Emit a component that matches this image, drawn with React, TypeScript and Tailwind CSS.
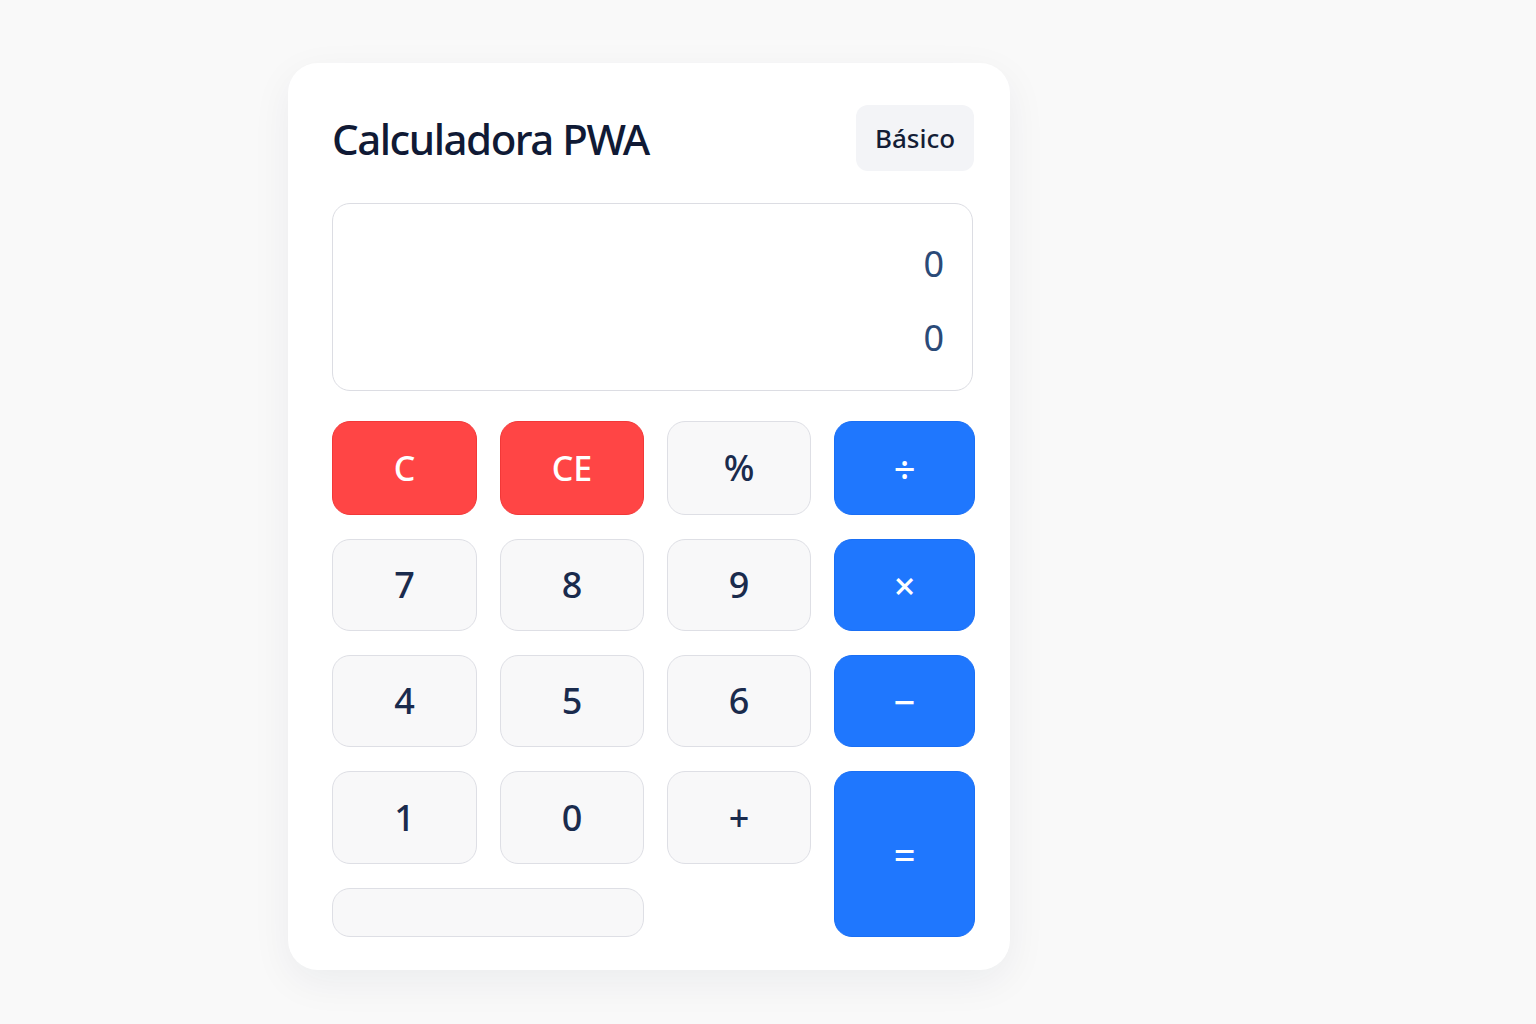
const font = { fontFamily: '"Noto Sans", "Open Sans", sans-serif' };

type Key = {
  label: string;
  kind: "num" | "red" | "op";
  className?: string;
};

const keys: Key[] = [
  { label: "C", kind: "red" },
  { label: "CE", kind: "red" },
  { label: "%", kind: "num", className: "text-[28px]" },
  { label: "÷", kind: "op" },
  { label: "7", kind: "num" },
  { label: "8", kind: "num" },
  { label: "9", kind: "num" },
  { label: "×", kind: "op" },
  { label: "4", kind: "num" },
  { label: "5", kind: "num" },
  { label: "6", kind: "num" },
  { label: "−", kind: "op" },
  { label: "1", kind: "num" },
  { label: "0", kind: "num" },
  { label: "+", kind: "num", className: "text-[32px]" },
  { label: "=", kind: "op", className: "row-span-2" },
];

const kindStyles = {
  num: "bg-[#f8f8f9] border-[#dedfe5] text-[#1a2b4d] text-[36px]",
  red: "bg-[#ff4545] border-[#f23838] text-white text-[34px]",
  op: "bg-[#1f77fe] border-[#1a6ff5] text-white text-[38px]",
};

const App = () => {
  return (
    <div className="min-h-screen bg-[#f9f9f9] pl-[288px] pt-[63px]" style={font}>
      <div className="w-[722px] h-[907px] bg-white rounded-[30px] shadow-[0_12px_40px_rgba(20,30,60,0.06)] pl-[44px] pr-[35px] pt-[42px]">
        {/* Header */}
        <div className="flex items-center justify-between pr-[1px]">
          <h1 className="text-[42px] font-medium tracking-[-0.035em] text-[#101a35] leading-none pt-[2px]">
            Calculadora PWA
          </h1>
          <span className="h-[66px] w-[118px] rounded-[12px] bg-[#f3f4f7] flex items-center justify-center text-[26px] font-medium text-[#141d36]">
            Básico
          </span>
        </div>

        {/* Display */}
        <div className="mt-[32px] w-[641px] h-[188px] rounded-[18px] border border-[#dcdde3] pt-[38px] pr-[28px] flex flex-col items-end gap-[30px] text-[36px] leading-[44px] text-[#2b4a78]">
          <div>0</div>
          <div>0</div>
        </div>

        {/* Keypad */}
        <div className="mt-[30px] w-[643px] grid grid-cols-[145px_144px_144px_141px] gap-x-[23px] gap-y-[24px] grid-rows-[94px_92px_92px_93px_49px]">
          {keys.map((k, i) => (
            <button
              key={i}
              className={`rounded-[18px] border flex items-center justify-center font-medium leading-none ${kindStyles[k.kind]} ${k.className ?? ""}`}
            >
              {k.label}
            </button>
          ))}
          <div className="col-span-2 rounded-[18px] border border-[#dedfe5] bg-[#f8f8f9]" />
        </div>
      </div>
    </div>
  );
};

export default App;
